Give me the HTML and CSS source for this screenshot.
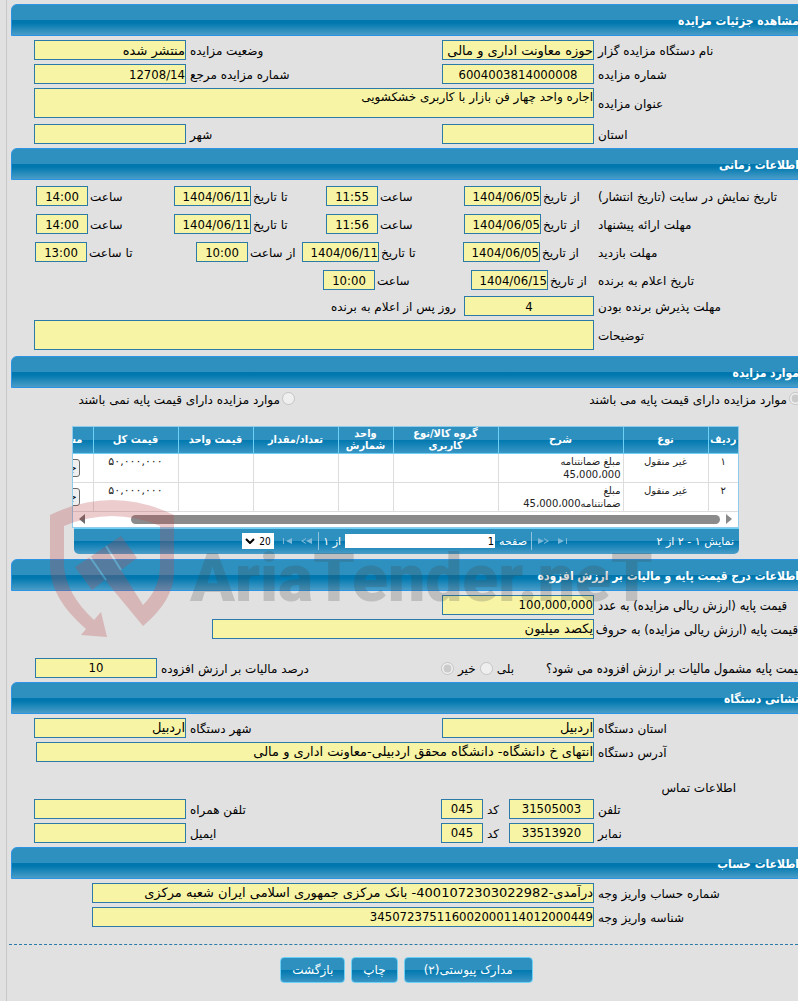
FILE: index.html
```html
<!DOCTYPE html>
<html lang="fa">
<head>
    <meta charset="utf-8">
    <title>مشاهده جزئیات مزایده</title>
    <link rel="stylesheet" href="styles.css">
</head>
<body>
    <div class="page" dir="rtl">
        <h2>مشاهده جزئیات مزایده</h2>
        <div class="section">
            <div class="row">
                <label for="org">نام دستگاه مزایده گزار</label>
                <input type="text" id="org" value="حوزه معاونت اداری و مالی دانشگاه" readonly>
                <label for="status">وضعیت مزایده</label>
                <input type="text" id="status" value="منتشر شده" readonly>
            </div>
            <div class="row">
                <label for="number">شماره مزایده</label>
                <input type="text" id="number" class="num center" value="6004003814000008" readonly>
                <label for="refNumber">شماره مزایده مرجع</label>
                <input type="text" id="refNumber" class="num" value="12708/14" readonly>
            </div>
            <div class="row row-wide">
                <label for="title">عنوان مزایده</label>
                <textarea id="title" readonly>اجاره واحد چهار فن بازار با کاربری خشکشویی</textarea>
            </div>
            <div class="row row-after-area">
                <label for="province">استان</label>
                <input type="text" id="province" readonly>
                <label for="city">شهر</label>
                <input type="text" id="city" readonly>
            </div>
        </div>

        <h2>اطلاعات زمانی</h2>
        <div class="section section-time">
            <div class="row time">
                <span class="caption">تاریخ نمایش در سایت (تاریخ انتشار)</span>
                <label for="showFrom">از تاریخ</label>
                <input type="text" id="showFrom" class="num" value="1404/06/05" readonly>
                <label for="showFromHour">ساعت</label>
                <input type="text" id="showFromHour" class="num center" value="11:55" readonly>
                <label for="showTo">تا تاریخ</label>
                <input type="text" id="showTo" class="num" value="1404/06/11" readonly>
                <label for="showToHour">ساعت</label>
                <input type="text" id="showToHour" class="num center" value="14:00" readonly>
            </div>
            <div class="row time">
                <span class="caption">مهلت ارائه پیشنهاد</span>
                <label for="offerFrom">از تاریخ</label>
                <input type="text" id="offerFrom" class="num" value="1404/06/05" readonly>
                <label for="offerFromHour">ساعت</label>
                <input type="text" id="offerFromHour" class="num center" value="11:56" readonly>
                <label for="offerTo">تا تاریخ</label>
                <input type="text" id="offerTo" class="num" value="1404/06/11" readonly>
                <label for="offerToHour">ساعت</label>
                <input type="text" id="offerToHour" class="num center" value="14:00" readonly>
            </div>
            <div class="row time time-visit">
                <span class="caption">مهلت بازدید</span>
                <label for="visitFrom">از تاریخ</label>
                <input type="text" id="visitFrom" class="num" value="1404/06/05" readonly>
                <label for="visitTo">تا تاریخ</label>
                <input type="text" id="visitTo" class="num" value="1404/06/11" readonly>
                <label for="visitFromHour">از ساعت</label>
                <input type="text" id="visitFromHour" class="num center" value="10:00" readonly>
                <label for="visitToHour">تا ساعت</label>
                <input type="text" id="visitToHour" class="num center" value="13:00" readonly>
            </div>
            <div class="row time time-winner">
                <span class="caption">تاریخ اعلام به برنده</span>
                <label for="winnerDate">از تاریخ</label>
                <input type="text" id="winnerDate" class="num" value="1404/06/15" readonly>
                <label for="winnerHour">ساعت</label>
                <input type="text" id="winnerHour" class="num center" value="10:00" readonly>
            </div>
            <div class="row accept">
                <label for="acceptDays">مهلت پذیرش برنده بودن</label>
                <input type="text" id="acceptDays" class="num center" value="4" readonly>
                <span class="after">روز پس از اعلام به برنده</span>
            </div>
            <div class="row row-wide">
                <label for="notes">توضیحات</label>
                <textarea id="notes" readonly></textarea>
            </div>
        </div>

        <h2>موارد مزایده</h2>
        <div class="section items">
            <div class="choices">
                <label><input type="radio" name="hasBase" checked disabled>موارد مزایده دارای قیمت پایه می باشند</label>
                <label><input type="radio" name="hasBase" disabled>موارد مزایده دارای قیمت پایه نمی باشند</label>
            </div>

            <div class="grid">
                <div class="grid-view">
                    <table>
                        <colgroup>
                            <col class="w30"><col class="w85"><col class="w125"><col class="w105"><col class="w55"><col class="w85"><col class="w75"><col class="w85"><col class="w85">
                        </colgroup>
                        <thead>
                            <tr>
                                <th>ردیف</th>
                                <th>نوع</th>
                                <th>شرح</th>
                                <th>گروه کالا/نوع کاربری</th>
                                <th>واحد شمارش</th>
                                <th>تعداد/مقدار</th>
                                <th>قیمت واحد</th>
                                <th>قیمت کل</th>
                                <th class="more">مستندات</th>
                            </tr>
                        </thead>
                        <tbody>
                            <tr>
                                <td>۱</td>
                                <td>غیر منقول</td>
                                <td class="desc">مبلغ ضمانتنامه 45،000،000</td>
                                <td></td>
                                <td></td>
                                <td></td>
                                <td></td>
                                <td class="price">۵۰,۰۰۰,۰۰۰</td>
                                <td><button type="button" class="details">جزئیات</button></td>
                            </tr>
                            <tr>
                                <td>۲</td>
                                <td>غیر منقول</td>
                                <td class="desc">مبلغ ضمانتنامه45،000،000</td>
                                <td></td>
                                <td></td>
                                <td></td>
                                <td></td>
                                <td class="price">۵۰,۰۰۰,۰۰۰</td>
                                <td><button type="button" class="details">جزئیات</button></td>
                            </tr>
                        </tbody>
                    </table>
                    <div class="scroll">
                        <svg width="6" height="10" viewBox="0 0 6 10"><path d="M0 0L6 5L0 10Z" fill="#8a8a8a"/></svg>
                        <div class="thumb"></div>
                        <svg width="6" height="10" viewBox="0 0 6 10"><path d="M6 0L0 5L6 10Z" fill="#6a6a6a"/></svg>
                    </div>
                </div>
                <div class="pager">
                    <span class="info">نمایش ۱ - ۲ از ۲</span>
                    <button type="button" aria-label="صفحه اول" disabled><svg width="10" height="6" viewBox="0 0 10 6"><path d="M0 0L6 3L0 6ZM8 0H9V6H8Z"/></svg></button>
                    <button type="button" aria-label="صفحه قبل" disabled><svg width="12" height="6" viewBox="0 0 12 6"><path d="M0 0L6 3L0 6ZM6 0L11 3L6 6V5L9 3L6 1Z"/></svg></button>
                    <span class="sep"></span>
                    <label for="pageNo">صفحه</label>
                    <input type="text" id="pageNo" value="1">
                    <span>از ۱</span>
                    <span class="sep"></span>
                    <button type="button" aria-label="صفحه بعد" disabled><svg width="12" height="6" viewBox="0 0 12 6"><path d="M12 0L6 3L12 6ZM6 0L1 3L6 6V5L3 3L6 1Z"/></svg></button>
                    <button type="button" aria-label="صفحه آخر" disabled><svg width="10" height="6" viewBox="0 0 10 6"><path d="M10 0L4 3L10 6ZM1 0H2V6H1Z"/></svg></button>
                    <span class="size">
                        <select aria-label="تعداد در صفحه"><option>20</option></select>
                        <svg width="10" height="6" viewBox="0 0 10 6"><path d="M1 1L5 5L9 1" fill="none" stroke="#000" stroke-width="2"/></svg>
                    </span>
                </div>
            </div>
        </div>

        <h2>اطلاعات درج قیمت پایه و مالیات بر ارزش افزوده</h2>
        <div class="section">
            <div class="row">
                <label for="basePrice" class="long">قیمت پایه (ارزش ریالی مزایده) به عدد</label>
                <input type="text" id="basePrice" class="num" value="100,000,000" readonly>
            </div>
            <div class="row row-words">
                <label for="baseWords" class="long">قیمت پایه (ارزش ریالی مزایده) به حروف</label>
                <input type="text" id="baseWords" value="یکصد میلیون" readonly>
            </div>
            <div class="row tax">
                <span class="question long">قیمت پایه مشمول مالیات بر ارزش افزوده می شود؟</span>
                <label class="option">بلی <input type="radio" name="tax" disabled></label>
                <label class="option">خیر <input type="radio" name="tax" checked disabled></label>
                <label for="taxPercent">درصد مالیات بر ارزش افزوده</label>
                <input type="text" id="taxPercent" class="num center" value="10" readonly>
            </div>
        </div>

        <h2>نشانی دستگاه</h2>
        <div class="section">
            <div class="row">
                <label for="orgProvince">استان دستگاه</label>
                <input type="text" id="orgProvince" value="اردبیل" readonly>
                <label for="orgCity">شهر دستگاه</label>
                <input type="text" id="orgCity" value="اردبیل" readonly>
            </div>
            <div class="row row-address">
                <label for="address">آدرس دستگاه</label>
                <input type="text" id="address" value="انتهای خ دانشگاه- دانشگاه محقق اردبیلی-معاونت اداری و مالی" readonly>
            </div>
            <h3>اطلاعات تماس</h3>
            <div class="row phone">
                <label for="tel">تلفن</label>
                <input type="text" id="tel" class="num center" value="31505003" readonly>
                <label for="telCode">کد</label>
                <input type="text" id="telCode" class="num center" value="045" readonly>
                <label for="mobile">تلفن همراه</label>
                <input type="text" id="mobile" readonly>
            </div>
            <div class="row phone">
                <label for="fax">نمابر</label>
                <input type="text" id="fax" class="num center" value="33513920" readonly>
                <label for="faxCode">کد</label>
                <input type="text" id="faxCode" class="num center" value="045" readonly>
                <label for="email">ایمیل</label>
                <input type="text" id="email" readonly>
            </div>
        </div>

        <h2>اطلاعات حساب</h2>
        <div class="section">
            <div class="row row-account">
                <label for="account">شماره حساب واریز وجه</label>
                <input type="text" id="account" value="درآمدی-4001072303022982- بانک مرکزی جمهوری اسلامی ایران شعبه مرکزی" readonly>
            </div>
            <div class="row row-account">
                <label for="payId">شناسه واریز وجه</label>
                <input type="text" id="payId" class="num" value="345072375116002000114012000449" readonly>
            </div>
        </div>

        <div class="actions">
            <button type="button" class="attach">مدارک پیوستی(۲)</button>
            <button type="button">چاپ</button>
            <button type="button">بازگشت</button>
        </div>

        <div class="watermark" dir="ltr">
            <svg width="126" height="140" viewBox="0 0 126 140">
                <path d="M0 15Q62 -15 124 15V72Q124 100 93 126L55 80L42 90L25 67L40 57L56 46L71 36L87 58L71 70L93 105Q110 88 110 66V26Q62 6 14 26V66Q16 94 44 120L51 112L57 137L31 135L36 129Q0 98 0 66Z"/>
                <path class="gap" d="M40 57L56 80M56 46L71 70"/>
            </svg>
            <span>AriaTender.neT</span>
        </div>
    </div>
</body>
</html>
```

FILE: styles.css
```css
* {
    box-sizing: border-box;
}

body {
    margin: 0;
    background-color: #e1e1e1;
    font-family: "DejaVu Sans", sans-serif;
    font-size: 12px;
    color: #000;
}

.page {
    position: relative;
    margin-left: 6px;
    padding-top: 4px;
    padding-bottom: 18px;
    border-left: 1px solid #c8c8c8;
    overflow: hidden;
}

h2 {
    height: 32px;
    margin: 0 -8px 0 4px;
    padding: 2px 6px 0 0;
    border: 1px solid #2d93e3;
    border-radius: 6px 6px 0 0;
    background: linear-gradient(#2e90bf 0, #2e90bf 50%, #0078af 50%, #0078af 60%, #4a9dc8 100%);
    font-family: "DejaVu Sans Condensed", "DejaVu Sans", sans-serif;
    font-size: 12px;
    line-height: 28px;
    color: #fff;
}

h3 {
    margin: 15px 62px 0 0;
    font-size: 12px;
    font-weight: normal;
    line-height: 14px;
}

.section {
    display: flex;
    flex-direction: column;
    gap: 4px;
    padding: 4px 0 4px 27px;
}

.row {
    display: grid;
    grid-template-columns: 200px 152px 1fr 152px;
    gap: 4px;
    align-items: center;
}

.row-wide {
    grid-template-columns: 200px 1fr;
}

.row-words {
    grid-template-columns: 200px 382px;
}

.row-address {
    grid-template-columns: 200px 1fr;
    padding-left: 2px;
}

.row-account {
    grid-template-columns: 200px 1fr;
    padding-left: 58px;
}

.row-after-area {
    margin-top: 2px;
}

.row label,
.row span {
    padding-top: 2px;
    line-height: 18px;
    text-align: left;
    white-space: nowrap;
}

.row .long {
    font-family: "DejaVu Sans Condensed", "DejaVu Sans", sans-serif;
    font-size: 13px;
}

.row input[type="text"],
textarea {
    width: 100%;
    height: 20px;
    margin: 0;
    padding: 0;
    border: 1px solid #2b7aa8;
    border-radius: 0;
    background-color: #f7f4a6;
    font-family: inherit;
    font-size: 13px;
    color: #000;
}

.row input.num {
    font-family: "DejaVu Sans Condensed", "DejaVu Sans", sans-serif;
}

textarea {
    display: block;
    height: 30px;
    font-size: 12px;
    line-height: 16px;
    resize: none;
}

.row input.center {
    text-align: center;
}

/* dates and hours */
.section-time {
    padding-top: 6px;
    padding-bottom: 6px;
}

.time {
    grid-template-columns: 200px 53px 77px 82px 52px 1fr 77px 82px 52px;
    gap: 2px;
    margin-bottom: 4px;
    padding-left: 2px;
}

.time-visit {
    grid-template-columns: 200px 54px 77px 80px 77px 50px 52px 1fr 52px;
    padding-left: 1px;
}

.time-winner {
    grid-template-columns: 200px 46px 77px 92px 52px;
    margin-bottom: 2px;
}

.accept {
    grid-template-columns: 200px 130px 1fr;
}

.row .after {
    padding-right: 4px;
    text-align: right;
}

input[type="radio"] {
    width: 13px;
    height: 13px;
    margin: 0;
}

/* items grid */
.items {
    padding: 4px 0 5px 27px;
}

.choices {
    display: grid;
    grid-template-columns: 507px 1fr;
    margin-right: -4px;
}

.choices label {
    display: flex;
    gap: 2px;
    line-height: 16px;
}

.grid {
    margin: 14px 59px 0 38px;
}

.grid-view {
    overflow: hidden;
    border: 1px solid #8fcbea;
    background-color: #fff;
}

table {
    width: 730px;
    border-collapse: collapse;
    table-layout: fixed;
}

.w30 { width: 30px; }
.w55 { width: 55px; }
.w75 { width: 75px; }
.w85 { width: 85px; }
.w105 { width: 105px; }
.w125 { width: 125px; }

th {
    height: 26px;
    padding: 0 2px;
    border-left: 1px solid #6fd0f5;
    border-bottom: 1px solid #6fd0f5;
    background: linear-gradient(#2e90bf 0, #2e90bf 50%, #0078af 50%, #3a95c4 100%);
    font-family: "DejaVu Sans Condensed", "DejaVu Sans", sans-serif;
    font-size: 11px;
    line-height: 12px;
    color: #fff;
}

th:first-child {
    padding: 0;
}

th.more {
    padding-right: 10px;
    text-align: right;
}

td {
    height: 29px;
    padding: 1px 2px;
    border-left: 1px solid #ddd;
    border-bottom: 1px solid #ddd;
    font-size: 10px;
    line-height: 13px;
    text-align: center;
    vertical-align: top;
    color: #222;
}

td.desc {
    padding-left: 20px;
    text-align: right;
}

td.price {
    font-size: 11px;
}

.details {
    width: 58px;
    height: 18px;
    margin: 4px 0 0;
    padding: 0 2px;
    border: 1px solid #6b6b6b;
    border-radius: 3px;
    background-color: #efefef;
    font-family: inherit;
    font-size: 10px;
    line-height: 14px;
    text-align: right;
}

.scroll {
    display: flex;
    align-items: center;
    gap: 6px;
    height: 15px;
    padding: 0 6px;
}

.thumb {
    flex: 1;
    height: 9px;
    margin-left: 40px;
    border-radius: 5px;
    background-color: #8b8b8b;
}

.pager {
    display: flex;
    align-items: center;
    gap: 4px;
    height: 26px;
    margin-left: 2px;
    padding-right: 5px;
    border-top: 1px solid #6fd0f5;
    border-radius: 0 0 5px 5px;
    background: linear-gradient(#2e90bf 0, #2e90bf 50%, #0078af 50%, #4a9dc8 100%);
    font-size: 11px;
    color: #fff;
}

.pager .info {
    width: 160px;
}

.pager button {
    display: flex;
    margin: 0 2px;
    padding: 0;
    border: 0;
    background: none;
    fill: #7db8d8;
}

.sep {
    width: 1px;
    height: 18px;
    background-color: #8cc4e0;
}

.pager input {
    width: 150px;
    height: 14px;
    padding: 0 1px;
    border: 0;
    font-family: inherit;
    font-size: 10px;
}

.size {
    display: grid;
    direction: ltr;
    align-items: center;
    margin-right: 2px;
}

.size select,
.size svg {
    grid-area: 1 / 1;
}

.size svg {
    margin-left: 3px;
    pointer-events: none;
}

.size select {
    width: 32px;
    height: 16px;
    padding: 0 0 0 17px;
    border: 0;
    appearance: none;
    background-color: #fff;
    font-family: "DejaVu Sans Condensed", "DejaVu Sans", sans-serif;
    font-size: 10px;
    color: #000;
}

/* tax */
.tax {
    display: flex;
    margin-top: 15px;
    padding-left: 1px;
}

.tax .question {
    width: 258px;
    margin-right: -6px;
}

.tax .option {
    display: flex;
    align-items: center;
    gap: 4px;
}

.tax .question + .option {
    margin-right: 28px;
}

.tax label[for] {
    flex: 1;
}

.row input#taxPercent {
    width: 122px;
}

.phone {
    grid-template-columns: 200px 85px 18px 42px 1fr 152px;
}

/* buttons */
.actions {
    display: flex;
    justify-content: center;
    gap: 6px;
    margin: 13px 0 0 2px;
    padding: 12px 0 0 6px;
    border-top: 1px dashed #2b7aa8;
}

.actions button {
    height: 26px;
    padding: 0 11px;
    border: 1px solid #6fd0f5;
    border-radius: 4px;
    background: linear-gradient(#2e90bf 0, #2e90bf 50%, #0078af 50%, #3a95c4 100%);
    font-family: inherit;
    font-size: 12px;
    color: #fff;
}

.actions .attach {
    padding: 0 19px;
}

.watermark {
    position: absolute;
    left: 43px;
    top: 500px;
    display: flex;
    gap: 14px;
    pointer-events: none;
}

.watermark svg {
    fill: #be464b;
    opacity: 0.27;
}

.watermark .gap {
    stroke: #e1e1e1;
    stroke-width: 2;
}

.watermark span {
    padding-top: 14px;
    font-family: Roboto, sans-serif;
    font-size: 66px;
    font-weight: 900;
    line-height: 130px;
    color: rgba(70, 70, 70, 0.22);
}
```
